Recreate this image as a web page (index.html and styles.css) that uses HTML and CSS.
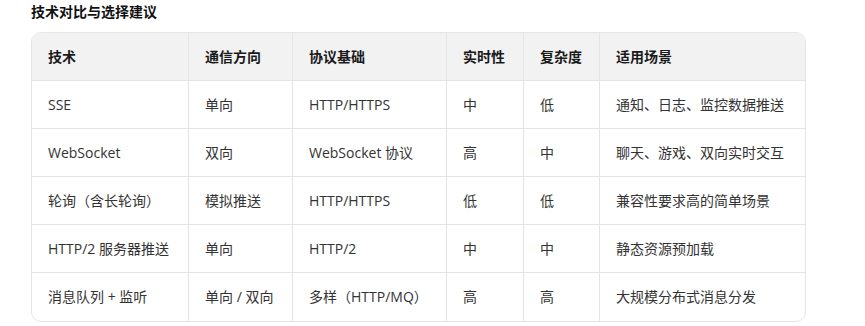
FILE: index.html
```html
<!DOCTYPE html>
<html lang="zh-CN">
<head>
<meta charset="utf-8">
<title>技术对比与选择建议</title>
<link rel="stylesheet" href="styles.css">
</head>
<body>
<div class="page">
  <h3 class="title">技术对比与选择建议</h3>
  <div class="table-wrap">
    <table class="cmp">
      <colgroup>
        <col class="c1"><col class="c2"><col class="c3"><col class="c4"><col class="c5"><col class="c6">
      </colgroup>
      <thead>
        <tr><th>技术</th><th>通信方向</th><th>协议基础</th><th>实时性</th><th>复杂度</th><th>适用场景</th></tr>
      </thead>
      <tbody>
        <tr><td>SSE</td><td>单向</td><td>HTTP/HTTPS</td><td>中</td><td>低</td><td>通知、日志、监控数据推送</td></tr>
        <tr><td>WebSocket</td><td>双向</td><td>WebSocket 协议</td><td>高</td><td>中</td><td>聊天、游戏、双向实时交互</td></tr>
        <tr><td>轮询（含长轮询）</td><td>模拟推送</td><td>HTTP/HTTPS</td><td>低</td><td>低</td><td>兼容性要求高的简单场景</td></tr>
        <tr><td>HTTP/2 服务器推送</td><td>单向</td><td>HTTP/2</td><td>中</td><td>中</td><td>静态资源预加载</td></tr>
        <tr><td>消息队列 + 监听</td><td>单向 / 双向</td><td>多样（HTTP/MQ）</td><td>高</td><td>高</td><td>大规模分布式消息分发</td></tr>
      </tbody>
    </table>
  </div>
</div>
</body>
</html>
```

FILE: styles.css
```css
html, body {
  margin: 0;
  padding: 0;
  background: #ffffff;
}

body {
  font-family: "Open Sans", "Noto Sans CJK SC", sans-serif;
  color: #333333;
}

.page {
  padding: 2px 0 0 31px;
  width: 775px;
}

.title {
  margin: 0;
  font-size: 14px;
  line-height: 20px;
  font-weight: 700;
  color: #111111;
}

.table-wrap {
  margin-top: 10px;
  border: 1px solid #e5e5e5;
  border-radius: 10px;
  overflow: hidden;
}

.cmp {
  width: 100%;
  table-layout: fixed;
  border-collapse: separate;
  border-spacing: 0;
  font-size: 14px;
}

.c1 { width: 157px; }
.c2 { width: 104px; }
.c3 { width: 154px; }
.c4 { width: 77px; }
.c5 { width: 76px; }
.c6 { width: auto; }

.cmp th,
.cmp td {
  box-sizing: border-box;
  height: 48px;
  padding: 0 16px;
  text-align: left;
  vertical-align: middle;
  border-right: 1px solid #e5e5e5;
  border-bottom: 1px solid #e5e5e5;
  white-space: nowrap;
  line-height: 20px;
}

.cmp th:last-child,
.cmp td:last-child {
  border-right: none;
}

.cmp tbody tr:last-child td {
  border-bottom: none;
}

.cmp th {
  background: #f2f2f2;
  font-weight: 700;
  color: #1a1a1a;
}

.cmp td {
  color: #333333;
}
```
